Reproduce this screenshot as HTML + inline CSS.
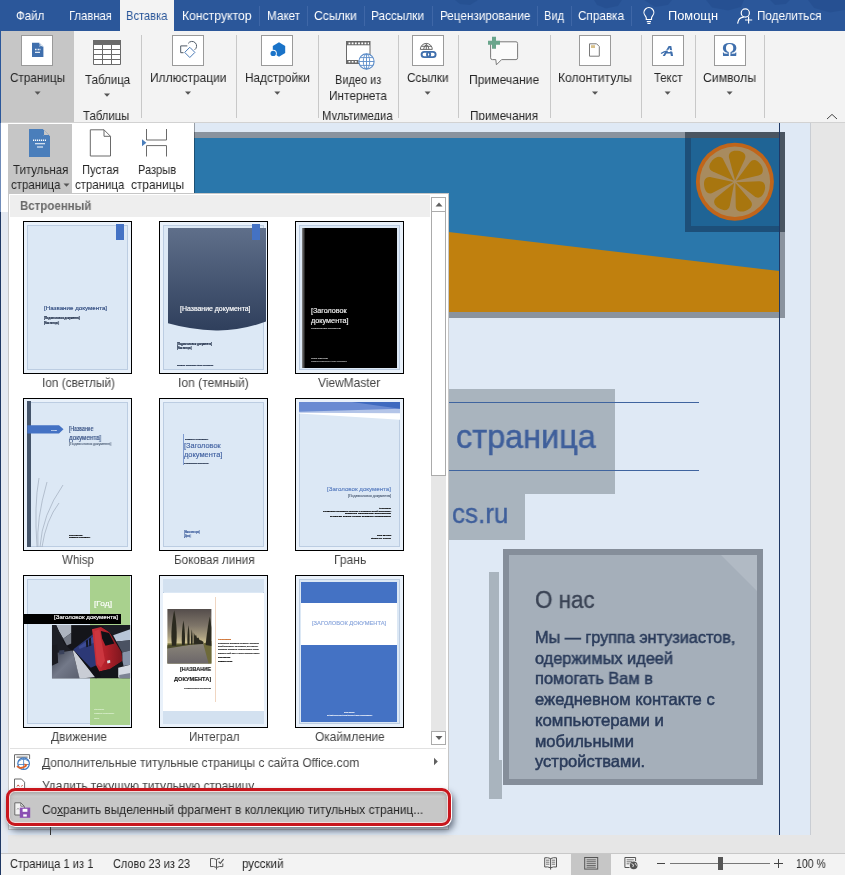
<!DOCTYPE html>
<html lang="ru"><head><meta charset="utf-8"><title>Word</title>
<style>

html,body{margin:0;padding:0;}
body{width:845px;height:875px;overflow:hidden;position:relative;background:#e6e6e6;font-family:"Liberation Sans",sans-serif;}
.a{position:absolute;}
.t{position:absolute;white-space:nowrap;line-height:1;transform-origin:0 0;display:block;will-change:transform;}
svg{position:absolute;overflow:visible;}
.th{width:109px;height:153px;box-sizing:border-box;border:1px solid #000;background:#dce8f5;overflow:hidden;}
.th .a{position:absolute;}
.fr1{left:0;top:0;right:0;bottom:0;border:3px solid #e9f1fa;}
.fr2{left:3px;top:3px;right:3px;bottom:3px;border:1px solid #bccde2;}
u{text-decoration:underline;text-decoration-skip-ink:none;}

</style></head>
<body>
<div class="a" style="left:0px;top:123px;width:810px;height:712px;background:#dfe9f5;"></div>
<div class="a" style="left:194px;top:132px;width:591px;height:6px;background:#8a939e;"></div>
<div class="a" style="left:194px;top:138px;width:585.5px;height:174px;background:#2a77ab;"></div>
<svg style="left:0;top:0" width="845" height="875"><polygon points="194,202 779.5,271 779.5,312 194,312" fill="#c0800e"/></svg>
<div class="a" style="left:194px;top:312px;width:591px;height:6px;background:#8a939e;"></div>
<div class="a" style="left:780px;top:138px;width:5px;height:180px;background:#8a939e;"></div>
<div class="a" style="left:685px;top:132px;width:100px;height:100px;background:#1d4f79;"></div>
<div class="a" style="left:685px;top:132px;width:100px;height:6px;background:#4a5561;"></div>
<div class="a" style="left:780px;top:132px;width:5px;height:100px;background:#4a5561;"></div>
<div class="a" style="left:691px;top:138px;width:89px;height:88px;background:#1f6495;"></div>
<svg style="left:0;top:0" width="845" height="875">
<circle cx="734.9" cy="181.7" r="39" fill="#c0651a"/>
<circle cx="734.9" cy="181.7" r="35.2" fill="#a88b5f"/>
<g fill="#a8760f" transform="translate(734.9,181.7)">
<path transform="rotate(5.0)" d="M0,-1.5 L-7.8,-23 C-9.6,-28 -6,-31 0,-31 C6,-31 9.6,-28 7.8,-23 Z"/><path transform="rotate(56.4)" d="M0,-1.5 L-7.8,-23 C-9.6,-28 -6,-31 0,-31 C6,-31 9.6,-28 7.8,-23 Z"/><path transform="rotate(107.9)" d="M0,-1.5 L-7.8,-23 C-9.6,-28 -6,-31 0,-31 C6,-31 9.6,-28 7.8,-23 Z"/><path transform="rotate(159.3)" d="M0,-1.5 L-7.8,-23 C-9.6,-28 -6,-31 0,-31 C6,-31 9.6,-28 7.8,-23 Z"/><path transform="rotate(210.7)" d="M0,-1.5 L-7.8,-23 C-9.6,-28 -6,-31 0,-31 C6,-31 9.6,-28 7.8,-23 Z"/><path transform="rotate(262.1)" d="M0,-1.5 L-7.8,-23 C-9.6,-28 -6,-31 0,-31 C6,-31 9.6,-28 7.8,-23 Z"/><path transform="rotate(313.6)" d="M0,-1.5 L-7.8,-23 C-9.6,-28 -6,-31 0,-31 C6,-31 9.6,-28 7.8,-23 Z"/>
</g></svg>
<div class="a" style="left:779px;top:123px;width:1px;height:712px;background:#1f3864;"></div>
<div class="a" style="left:449px;top:389px;width:166px;height:105px;background:#a9b4be;"></div>
<div class="a" style="left:449px;top:494px;width:76px;height:46px;background:#a9b4be;"></div>
<div class="a" style="left:449px;top:402px;width:250px;height:1.3px;background:#3f649f;"></div>
<div class="a" style="left:449px;top:470px;width:250px;height:1.3px;background:#3f649f;"></div>
<span class="t" style="left:455.60px;top:420.46px;font-size:33.60px;color:#3f5f9b;font-weight:normal;transform:scaleX(0.9666);-webkit-text-stroke:0.5px #3f5f9b;">страница</span>
<span class="t" style="left:451.80px;top:499.92px;font-size:27.50px;color:#3f5f9b;font-weight:normal;transform:scaleX(0.9464);-webkit-text-stroke:0.4px #3f5f9b;">cs.ru</span>
<div class="a" style="left:489px;top:572px;width:9.6px;height:227px;background:#a9b4be;"></div>
<div class="a" style="left:489px;top:760px;width:12.5px;height:39px;background:#a9b4be;"></div>
<div class="a" style="left:503px;top:549px;width:260px;height:235.6px;background:#858e9a;"></div>
<div class="a" style="left:509px;top:555px;width:248px;height:223.6px;background:#a5afba;"></div>
<svg style="left:0;top:0" width="845" height="875"><polygon points="721,555 757,555 757,591" fill="#b1bac4"/></svg>
<span class="t" style="left:534.50px;top:588.81px;font-size:23.50px;color:#3a4354;font-weight:normal;transform:scaleX(0.9535);-webkit-text-stroke:0.35px #3a4354;">О нас</span>
<span class="t" style="left:534.50px;top:628.93px;font-size:16.50px;color:#2a3b5a;font-weight:normal;transform:scaleX(0.9828);-webkit-text-stroke:0.5px #2a3b5a;">Мы — группа энтузиастов,</span>
<span class="t" style="left:534.50px;top:649.68px;font-size:16.50px;color:#2a3b5a;font-weight:normal;transform:scaleX(0.9891);-webkit-text-stroke:0.5px #2a3b5a;">одержимых идеей</span>
<span class="t" style="left:534.50px;top:670.43px;font-size:16.50px;color:#2a3b5a;font-weight:normal;transform:scaleX(0.9931);-webkit-text-stroke:0.5px #2a3b5a;">помогать Вам в</span>
<span class="t" style="left:534.50px;top:691.18px;font-size:16.50px;color:#2a3b5a;font-weight:normal;transform:scaleX(1.0051);-webkit-text-stroke:0.5px #2a3b5a;">ежедневном контакте с</span>
<span class="t" style="left:534.50px;top:711.93px;font-size:16.50px;color:#2a3b5a;font-weight:normal;transform:scaleX(1.0171);-webkit-text-stroke:0.5px #2a3b5a;">компьютерами и</span>
<span class="t" style="left:534.50px;top:732.68px;font-size:16.50px;color:#2a3b5a;font-weight:normal;transform:scaleX(0.9974);-webkit-text-stroke:0.5px #2a3b5a;">мобильными</span>
<span class="t" style="left:534.50px;top:753.43px;font-size:16.50px;color:#2a3b5a;font-weight:normal;transform:scaleX(1.0004);-webkit-text-stroke:0.5px #2a3b5a;">устройствами.</span>
<div class="a" style="left:810px;top:123px;width:1px;height:712px;background:#c9cdd3;"></div>
<div class="a" style="left:811px;top:123px;width:34px;height:730px;background:#e6e6e6;"></div>
<div class="a" style="left:0px;top:835px;width:845px;height:18px;background:#e6e6e6;"></div>
<div class="a" style="left:0px;top:0px;width:845px;height:30.7px;background:#2b579a;"></div>
<svg style="left:0;top:0" width="845" height="31"><g fill="#234c8c" opacity="0.55"><path d="M594,0 L622,0 L618,6 L606,8.5 L597,5 Z"/><path d="M644,0 L672,0 L668,5 L655,7 Z"/><path d="M706,0 L744,0 L741,7 L728,10.5 L712,7.5 Z"/><path d="M770,0 L790,0 L786,4 L775,5 Z"/><path d="M808,0 L845,0 L845,10 L830,12.5 L814,8 Z"/><path d="M455,0 L478,0 L470,5 L460,4 Z"/></g></svg>
<div class="a" style="left:120px;top:0px;width:54px;height:31px;background:#f3f3f3;"></div>
<span class="t" style="left:16.30px;top:9.93px;font-size:12.60px;color:#ffffff;font-weight:normal;transform:scaleX(0.9171);">Файл</span>
<span class="t" style="left:68.50px;top:9.93px;font-size:12.60px;color:#ffffff;font-weight:normal;transform:scaleX(0.8949);">Главная</span>
<span class="t" style="left:126.20px;top:9.93px;font-size:12.60px;color:#2b579a;font-weight:normal;transform:scaleX(0.8844);">Вставка</span>
<span class="t" style="left:182.40px;top:9.93px;font-size:12.60px;color:#ffffff;font-weight:normal;transform:scaleX(0.9692);">Конструктор</span>
<span class="t" style="left:266.50px;top:9.93px;font-size:12.60px;color:#ffffff;font-weight:normal;transform:scaleX(0.9283);">Макет</span>
<span class="t" style="left:314.00px;top:9.93px;font-size:12.60px;color:#ffffff;font-weight:normal;transform:scaleX(0.9652);">Ссылки</span>
<span class="t" style="left:371.30px;top:9.93px;font-size:12.60px;color:#ffffff;font-weight:normal;transform:scaleX(0.9375);">Рассылки</span>
<span class="t" style="left:439.60px;top:9.93px;font-size:12.60px;color:#ffffff;font-weight:normal;transform:scaleX(0.9296);">Рецензирование</span>
<span class="t" style="left:544.30px;top:9.93px;font-size:12.60px;color:#ffffff;font-weight:normal;transform:scaleX(0.8773);">Вид</span>
<span class="t" style="left:578.00px;top:9.93px;font-size:12.60px;color:#ffffff;font-weight:normal;transform:scaleX(0.9311);">Справка</span>
<span class="t" style="left:668.00px;top:9.93px;font-size:12.60px;color:#ffffff;font-weight:normal;transform:scaleX(1.0194);">Помощн</span>
<span class="t" style="left:757.00px;top:9.93px;font-size:12.60px;color:#ffffff;font-weight:normal;transform:scaleX(0.9274);">Поделиться</span>
<div class="a" style="left:259px;top:6px;width:1px;height:20px;background:#3f67a7;"></div>
<div class="a" style="left:306.6px;top:6px;width:1px;height:20px;background:#3f67a7;"></div>
<div class="a" style="left:363.6px;top:6px;width:1px;height:20px;background:#3f67a7;"></div>
<div class="a" style="left:431.9px;top:6px;width:1px;height:20px;background:#3f67a7;"></div>
<div class="a" style="left:536.7px;top:6px;width:1px;height:20px;background:#3f67a7;"></div>
<div class="a" style="left:570.6px;top:6px;width:1px;height:20px;background:#3f67a7;"></div>
<div class="a" style="left:630.5px;top:6px;width:1px;height:20px;background:#3f67a7;"></div>
<div class="a" style="left:0px;top:31px;width:845px;height:91px;background:#f3f3f3;"></div>
<div class="a" style="left:0px;top:122px;width:845px;height:1px;background:#d2d2d2;"></div>
<div class="a" style="left:1px;top:31px;width:73px;height:91px;background:#c6c6c6;"></div>
<div class="a" style="left:140.5px;top:35px;width:1px;height:83px;background:#c8c8c8;"></div>
<div class="a" style="left:235.6px;top:35px;width:1px;height:83px;background:#c8c8c8;"></div>
<div class="a" style="left:318.4px;top:35px;width:1px;height:83px;background:#c8c8c8;"></div>
<div class="a" style="left:398px;top:35px;width:1px;height:83px;background:#c8c8c8;"></div>
<div class="a" style="left:457.7px;top:35px;width:1px;height:83px;background:#c8c8c8;"></div>
<div class="a" style="left:549.8px;top:35px;width:1px;height:83px;background:#c8c8c8;"></div>
<div class="a" style="left:640.5px;top:35px;width:1px;height:83px;background:#c8c8c8;"></div>
<div class="a" style="left:694.5px;top:35px;width:1px;height:83px;background:#c8c8c8;"></div>
<div class="a" style="left:764px;top:35px;width:1px;height:83px;background:#c8c8c8;"></div>
<div class="a" style="left:21px;top:35px;width:32px;height:31px;background:#ffffff;border:1px solid #9a9a9a;box-sizing:border-box;"></div>
<div class="a" style="left:172px;top:35px;width:32px;height:31px;background:#ffffff;border:1px solid #9a9a9a;box-sizing:border-box;"></div>
<div class="a" style="left:261px;top:35px;width:32px;height:31px;background:#ffffff;border:1px solid #9a9a9a;box-sizing:border-box;"></div>
<div class="a" style="left:412px;top:35px;width:32px;height:31px;background:#ffffff;border:1px solid #9a9a9a;box-sizing:border-box;"></div>
<div class="a" style="left:579px;top:35px;width:32px;height:31px;background:#ffffff;border:1px solid #9a9a9a;box-sizing:border-box;"></div>
<div class="a" style="left:652px;top:35px;width:32px;height:31px;background:#ffffff;border:1px solid #9a9a9a;box-sizing:border-box;"></div>
<div class="a" style="left:714px;top:35px;width:32px;height:31px;background:#ffffff;border:1px solid #9a9a9a;box-sizing:border-box;"></div>
<span class="t" style="left:9.50px;top:72.23px;font-size:12.60px;color:#262626;font-weight:normal;transform:scaleX(0.9334);">Страницы</span>
<svg style="left:0;top:0" width="845" height="875"><polygon points="34.6,91.5 40.6,91.5 37.6,94.8" fill="#555"/></svg>
<span class="t" style="left:84.50px;top:74.43px;font-size:12.60px;color:#262626;font-weight:normal;transform:scaleX(0.9152);">Таблица</span>
<svg style="left:0;top:0" width="845" height="875"><polygon points="104,93.5 110,93.5 107,96.8" fill="#555"/></svg>
<span class="t" style="left:83.30px;top:110.43px;font-size:12.60px;color:#262626;font-weight:normal;transform:scaleX(0.9021);">Таблицы</span>
<span class="t" style="left:149.80px;top:72.23px;font-size:12.60px;color:#262626;font-weight:normal;transform:scaleX(0.9496);">Иллюстрации</span>
<svg style="left:0;top:0" width="845" height="875"><polygon points="185,91.5 191,91.5 188,94.8" fill="#555"/></svg>
<span class="t" style="left:244.70px;top:72.23px;font-size:12.60px;color:#262626;font-weight:normal;transform:scaleX(0.9391);">Надстройки</span>
<svg style="left:0;top:0" width="845" height="875"><polygon points="274.3,91.5 280.3,91.5 277.3,94.8" fill="#555"/></svg>
<span class="t" style="left:334.70px;top:74.43px;font-size:12.60px;color:#262626;font-weight:normal;transform:scaleX(0.8718);">Видео из</span>
<span class="t" style="left:329.00px;top:90.33px;font-size:12.60px;color:#262626;font-weight:normal;transform:scaleX(0.9383);">Интернета</span>
<span class="t" style="left:322.40px;top:110.43px;font-size:12.60px;color:#262626;font-weight:normal;transform:scaleX(0.8919);">Мультимедиа</span>
<span class="t" style="left:406.80px;top:72.23px;font-size:12.60px;color:#262626;font-weight:normal;transform:scaleX(0.9381);">Ссылки</span>
<svg style="left:0;top:0" width="845" height="875"><polygon points="424.6,91.5 430.6,91.5 427.6,94.8" fill="#555"/></svg>
<span class="t" style="left:468.50px;top:74.43px;font-size:12.60px;color:#262626;font-weight:normal;transform:scaleX(0.9629);">Примечание</span>
<span class="t" style="left:469.50px;top:110.43px;font-size:12.60px;color:#262626;font-weight:normal;transform:scaleX(0.9351);">Примечания</span>
<span class="t" style="left:558.00px;top:72.23px;font-size:12.60px;color:#262626;font-weight:normal;transform:scaleX(0.9653);">Колонтитулы</span>
<svg style="left:0;top:0" width="845" height="875"><polygon points="592,91.5 598,91.5 595,94.8" fill="#555"/></svg>
<span class="t" style="left:653.60px;top:72.23px;font-size:12.60px;color:#262626;font-weight:normal;transform:scaleX(0.8954);">Текст</span>
<svg style="left:0;top:0" width="845" height="875"><polygon points="664.6,91.5 670.6,91.5 667.6,94.8" fill="#555"/></svg>
<span class="t" style="left:703.00px;top:72.23px;font-size:12.60px;color:#262626;font-weight:normal;transform:scaleX(0.9730);">Символы</span>
<svg style="left:0;top:0" width="845" height="875"><polygon points="726.6,91.5 732.6,91.5 729.6,94.8" fill="#555"/></svg>
<div class="a" style="left:0px;top:853px;width:845px;height:22px;background:#f3f3f3;"></div>
<div class="a" style="left:0px;top:853px;width:845px;height:1px;background:#c8c8c8;"></div>
<div class="a" style="left:571px;top:854px;width:40px;height:21px;background:#c6c6c6;"></div>
<div class="a" style="left:75px;top:119.5px;width:770px;height:2.5px;background:#f3f3f3;"></div>
<div class="a" style="left:75px;top:122px;width:770px;height:1px;background:#d2d2d2;"></div>
<svg style="left:0;top:0" width="845" height="875"><path d="M32,42.8 H39.4 L43.4,46.8 V57 H32 Z" fill="#3f6fad"/><path d="M39.4,42.8 V46.8 H43.4 Z" fill="#fff"/><path d="M39.9,44 V46.4 H42.4" fill="none" stroke="#3f6fad" stroke-width="0.9"/><path d="M35,49.5 H40.5" stroke="#fff" stroke-width="1.4" stroke-dasharray="0.9,0.6"/><path d="M35,52.3 H40" stroke="#fff" stroke-width="1.1"/></svg>
<svg style="left:0;top:0" width="845" height="875"><rect x="93" y="40" width="28" height="25" fill="#fff" stroke="none"/><rect x="93" y="40" width="28" height="5" fill="#6a6a6a"/><path d="M93.5,40 V64.5 H120.5 V40 M93.5,49.5 H120.5 M93.5,54.5 H120.5 M93.5,59.5 H120.5 M102.5,45 V64.5 M111.5,45 V64.5" fill="none" stroke="#6a6a6a" stroke-width="1"/></svg>
<svg style="left:0;top:0" width="845" height="875"><g fill="none" stroke-width="1"><path d="M187.3,45.9 H180.7 V52.7 H183.5" stroke="#4f5a66"/><path d="M188.2,43.4 A4.6,4.6 0 1 1 194.6,49.8" stroke="#4f5a66"/><path d="M189.8,47.3 L194.9,52.4 L189.8,57.5 L184.7,52.4 Z" stroke="#4a7ab5" fill="#fff"/></g></svg>
<svg style="left:0;top:0" width="845" height="875"><path d="M279,42.3 L285.2,45.9 V53.1 L279,56.7 L272.8,53.1 V45.9 Z" fill="#1a73c8"/><circle cx="273.2" cy="53.4" r="3.6" fill="#fff"/><circle cx="273.2" cy="53.4" r="2.7" fill="#1a73c8"/></svg>
<svg style="left:0;top:0" width="845" height="875"><rect x="346.5" y="41.5" width="23.5" height="22" fill="#fff" stroke="#6a6a6a" stroke-width="1"/><rect x="346.5" y="41.5" width="23.5" height="3.8" fill="#6a6a6a"/><rect x="346.5" y="60" width="12" height="3.5" fill="#6a6a6a"/><path d="M348.5,43.4 H369" stroke="#fff" stroke-width="1.6" stroke-dasharray="1.8,1.4"/><path d="M348.5,61.8 H357.5" stroke="#fff" stroke-width="1.5" stroke-dasharray="1.8,1.4"/><circle cx="366.5" cy="61.5" r="7.6" fill="#fff" stroke="#5b8cc8" stroke-width="1.1"/><g fill="none" stroke="#5b8cc8" stroke-width="0.9"><ellipse cx="366.5" cy="61.5" rx="3.2" ry="7.4"/><path d="M359,61.5 H374 M360.2,57.6 H372.8 M360.2,65.4 H372.8 M366.5,54 V69"/></g></svg>
<svg style="left:0;top:0" width="845" height="875"><g fill="none" stroke="#6a6a6a" stroke-width="1"><path d="M420.3,49.4 A6,6 0 0 1 432.3,49.4 Z" fill="#fff"/><path d="M423.6,49.4 A2.8,6 0 0 1 429,49.4 M426.3,43.4 V49.4 M421.3,46.3 H431.3"/></g><g fill="none" stroke="#3f6fad" stroke-width="1.9"><rect x="421.6" y="51.9" width="8.6" height="5.2" rx="2.6"/><rect x="427" y="51.9" width="8.6" height="5.2" rx="2.6"/></g></svg>
<svg style="left:0;top:0" width="845" height="875"><path d="M492,41.8 H516 Q517.6,41.8 517.6,43.4 V57.8 Q517.6,59.6 516,59.6 H501.6 L496.4,64.8 L495.8,59.6 H492.3 Q490.6,59.6 490.6,57.8 V43.4 Q490.6,41.8 492,41.8 Z" fill="#fbfbfb" stroke="#7a7a7a" stroke-width="1"/><path d="M492,36.8 H496 V40.8 H500 V44.8 H496 V48.8 H492 V44.8 H488 V40.8 H492 Z" fill="#6aa58c"/></svg>
<svg style="left:0;top:0" width="845" height="875"><path d="M589.5,43.8 H596.6 L599.3,46.5 V56.2 H589.5 Z" fill="#fff" stroke="#7a7a7a" stroke-width="1"/><rect x="591" y="45.2" width="4" height="2.8" fill="#d8c08a"/></svg>
<span class="t" style="left:662.6px;top:42.6px;font-size:15.5px;font-weight:bold;font-style:italic;color:#3f6fad;">A</span>
<svg style="left:0;top:0" width="845" height="875"><path d="M661.5,52.3 Q667.5,48.6 675.5,52" fill="none" stroke="#fff" stroke-width="1.4"/><path d="M661,53.6 Q664,51.4 667.6,51" fill="none" stroke="#3f6fad" stroke-width="1.3"/></svg>
<span class="t" style="left:722.4px;top:40.4px;font-size:19px;font-weight:bold;font-family:'Liberation Serif',serif;color:#3f6fad;">Ω</span>
<svg style="left:0;top:0" width="845" height="875"><path d="M827,119 L832,114.4 L837,119" fill="none" stroke="#444" stroke-width="1"/></svg>
<svg style="left:0;top:0" width="845" height="875"><g transform="translate(1,0)" fill="none" stroke="#fff" stroke-width="1.2"><path d="M645.3,19.5 V18.2 Q645.3,17 644.3,15.8 A4.9,4.9 0 1 1 651.5,15.8 Q650.5,17 650.5,18.2 V19.5 Z"/><path d="M645.8,21.6 H650 M646.4,23.5 H649.4"/></g></svg>
<svg style="left:0;top:0" width="845" height="875"><g fill="none" stroke="#fff" stroke-width="1.2"><circle cx="745.3" cy="13" r="4.1"/><path d="M737.6,23.6 Q738.4,17.4 743.8,17.2"/><path d="M748.6,16.4 V23.6 M745,20 H752.2"/></g></svg>
<svg style="left:0;top:0" width="845" height="875"><g fill="none" stroke="#555" stroke-width="1"><path d="M216.5,859.5 Q213.5,858 210.5,858.6 V866.6 Q213.5,866 216.5,867.5 Z"/><path d="M216.5,859.5 Q218,858.3 220,858.4 M216.5,867.5 Q219.5,866 222.8,866.6 V863.5"/><path d="M216.5,867.5 V869.5"/><path d="M218.6,861.6 L220.3,863.3 L223.6,859.2" stroke-width="1.2"/></g></svg>
<svg style="left:0;top:0" width="845" height="875"><g fill="none" stroke="#555" stroke-width="1"><path d="M550.6,858.6 Q547.6,857.2 544.7,857.8 V867 Q547.6,866.4 550.6,867.8 Q553.6,866.4 556.5,867 V857.8 Q553.6,857.2 550.6,858.6 Z M550.6,858.6 V869.6"/><path d="M546,860.2 H549.4 M546,862.2 H549.4 M546,864.2 H549.4 M551.8,860.2 H555.2 M551.8,862.2 H555.2 M551.8,864.2 H555.2" stroke-width="0.8"/></g></svg>
<svg style="left:0;top:0" width="845" height="875"><g fill="none" stroke="#555" stroke-width="1"><rect x="584.7" y="857.5" width="13" height="11.6"/><path d="M586.6,859.8 H595.8 M586.6,861.7 H595.8 M586.6,863.6 H595.8 M586.6,865.5 H595.8 M586.6,867.2 H595.8" stroke-width="0.8"/></g></svg>
<svg style="left:0;top:0" width="845" height="875"><g fill="none" stroke="#555" stroke-width="1"><path d="M629.5,867.5 H624.9 V857.5 H635.6 V861"/><path d="M626.6,859.8 H633.8 M626.6,861.8 H632 M626.6,863.8 H629.5" stroke-width="0.8"/></g><circle cx="633.7" cy="865.4" r="3.8" fill="#555"/><path d="M631.5,863.6 L633.6,864.8 L632.8,867 M635,863 L636.6,865.6" stroke="#f3f3f3" stroke-width="0.9" fill="none"/></svg>
<span class="t" style="left:10.00px;top:857.83px;font-size:12.60px;color:#262626;font-weight:normal;transform:scaleX(0.8834);">Страница 1 из 1</span>
<span class="t" style="left:113.00px;top:857.83px;font-size:12.60px;color:#262626;font-weight:normal;transform:scaleX(0.8704);">Слово 23 из 23</span>
<span class="t" style="left:242.30px;top:857.83px;font-size:12.60px;color:#262626;font-weight:normal;transform:scaleX(0.9181);">русский</span>
<span class="t" style="left:796.20px;top:857.83px;font-size:12.60px;color:#262626;font-weight:normal;transform:scaleX(0.8343);">100 %</span>
<div class="a" style="left:670px;top:863px;width:100px;height:1px;background:#777;"></div>
<div class="a" style="left:718px;top:857px;width:5px;height:13px;background:#555;"></div>
<div class="a" style="left:657px;top:863px;width:8px;height:1.3px;background:#444;"></div>
<div class="a" style="left:774px;top:863px;width:9px;height:1.3px;background:#444;"></div>
<div class="a" style="left:778px;top:859px;width:1.3px;height:9px;background:#444;"></div>
<div class="a" style="left:0px;top:123px;width:194px;height:89px;background:#ffffff;"></div>
<div class="a" style="left:8px;top:124px;width:64px;height:69px;background:#c6c6c6;"></div>
<div class="a" style="left:194px;top:123px;width:1px;height:70px;background:rgba(0,0,0,0.32);"></div>
<span class="t" style="left:12.50px;top:163.63px;font-size:12.60px;color:#262626;font-weight:normal;transform:scaleX(0.9096);">Титульная</span>
<span class="t" style="left:10.70px;top:179.33px;font-size:12.60px;color:#262626;font-weight:normal;transform:scaleX(0.9119);">страница</span>
<svg style="left:0;top:0" width="845" height="875"><polygon points="63.5,183.5 69.5,183.5 66.5,186.8" fill="#555"/></svg>
<span class="t" style="left:81.50px;top:163.63px;font-size:12.60px;color:#262626;font-weight:normal;transform:scaleX(0.8909);">Пустая</span>
<span class="t" style="left:74.80px;top:179.33px;font-size:12.60px;color:#262626;font-weight:normal;transform:scaleX(0.9101);">страница</span>
<span class="t" style="left:137.50px;top:163.63px;font-size:12.60px;color:#262626;font-weight:normal;transform:scaleX(0.8784);">Разрыв</span>
<span class="t" style="left:130.50px;top:179.33px;font-size:12.60px;color:#262626;font-weight:normal;transform:scaleX(0.9427);">страницы</span>
<svg style="left:0;top:0" width="845" height="875">
<path d="M29,129 H43 L50,136 V157 H29 Z" fill="#4a7ebb"/>
<path d="M43,129 V136 H50 Z" fill="#c6c6c6"/><path d="M43.5,130 V135.5 H49" fill="none" stroke="#4a7ebb" stroke-width="1"/>
<path d="M33,140.3 H46" stroke="#fff" stroke-width="1.6" stroke-dasharray="1.2,0.8"/>
<path d="M35,143.8 H45 M37,147 H43" stroke="#fff" stroke-width="1.1"/>
<path d="M90.3,129.8 H104 L110.5,136.3 V156 H90.3 Z M104,129.8 V136.3 H110.5" fill="#fff" stroke="#6a6a6a" stroke-width="1"/>
<path d="M146.5,129 V140 H166.5 V129 M146.5,156.5 V145.6 H166.5 V156.5" fill="none" stroke="#6a6a6a" stroke-width="1"/>
<path d="M142,139.2 L146.4,142.7 L142,146.2 Z" fill="#4a7ebb"/>
</svg>
<div class="a" style="left:0px;top:212px;width:1.3px;height:663px;background:#1f3864;"></div>
<div class="a" style="left:0px;top:123px;width:1px;height:89px;background:#6f8bb8;"></div>
<div class="a" style="left:0px;top:31px;width:1px;height:92px;background:#2b579a;"></div>
<div class="a" style="left:1.3px;top:212px;width:6.7px;height:641px;background:#e4e9f1;"></div>
<div class="a" style="left:8px;top:193px;width:441px;height:637px;background:#ffffff;border:1px solid #c6c6c6;box-sizing:border-box;"></div>
<div class="a" style="left:10px;top:195px;width:420px;height:21.5px;background:#eeeeee;"></div>
<span class="t" style="left:19.50px;top:200.43px;font-size:12.60px;color:#6a6a6a;font-weight:bold;transform:scaleX(0.9123);">Встроенный</span>
<div class="a" style="left:431px;top:197px;width:15px;height:548px;background:#e6e6e6;"></div>
<div class="a" style="left:431px;top:197px;width:15px;height:15px;background:#ffffff;border:1px solid #ababab;box-sizing:border-box;"></div>
<div class="a" style="left:431px;top:211px;width:15px;height:265px;background:#ffffff;border:1px solid #ababab;box-sizing:border-box;"></div>
<div class="a" style="left:431px;top:731px;width:15px;height:14px;background:#ffffff;border:1px solid #ababab;box-sizing:border-box;"></div>
<svg style="left:0;top:0" width="845" height="875"><polygon points="435.5,206.5 442.5,206.5 439,202.5" fill="#606060"/><polygon points="435.5,736 442.5,736 439,740" fill="#606060"/><polygon points="434,757.7 434,765.3 437.8,761.5" fill="#606060"/></svg>
<div class="a th" style="left:23px;top:221px;"><div class="a fr1"></div><div class="a fr2"></div><div class="a" style="left:91.7px;top:2.4px;width:8.6px;height:15.2px;background:#4472c4;"></div><span class="t" style="left:20.30px;top:82.61px;font-size:6.20px;color:#2f4a7f;font-weight:normal;transform:scaleX(1.0018);-webkit-text-stroke:0.15px #2f4a7f;">[Название документа]</span><span class="t" style="left:20.30px;top:96.38px;font-size:2.60px;color:#1c2a44;font-weight:bold;transform:scaleX(1.0490);-webkit-text-stroke:0.18px #1c2a44;">[Подзаголовок документа]</span><span class="t" style="left:20.30px;top:100.68px;font-size:2.60px;color:#1c2a44;font-weight:bold;transform:scaleX(0.8850);-webkit-text-stroke:0.18px #1c2a44;">[Имя автора]</span></div>
<div class="a th" style="left:159px;top:221px;"><div class="a fr1"></div><div class="a fr2"></div><svg style="left:0px;top:0px" width="107" height="151" viewBox="160 222 107 151"><defs><linearGradient id="gd" x1="0" y1="0" x2="0" y2="1"><stop offset="0" stop-color="#5f6f8a"/><stop offset="1" stop-color="#2f3f5c"/></linearGradient></defs><path d="M168,228 H266 V321.5 Q240,331 216,330.5 Q190,329.5 168,323.2 Z" fill="url(#gd)"/></svg><div class="a" style="left:91.7px;top:2.4px;width:8.6px;height:15.2px;background:#4472c4;"></div><span class="t" style="left:20.30px;top:83.50px;font-size:6.40px;color:#ffffff;font-weight:normal;transform:scaleX(1.0838);-webkit-text-stroke:0.15px #ffffff;">[Название документа]</span><span class="t" style="left:17.00px;top:122.28px;font-size:2.60px;color:#1c2a44;font-weight:bold;transform:scaleX(1.0226);-webkit-text-stroke:0.18px #1c2a44;">[Подзаголовок документа]</span><span class="t" style="left:17.00px;top:125.58px;font-size:2.60px;color:#1c2a44;font-weight:bold;transform:scaleX(0.8730);-webkit-text-stroke:0.18px #1c2a44;">[Имя автора]</span><span class="t" style="left:17.00px;top:141.70px;font-size:2.20px;color:#1c2a44;font-weight:bold;transform:scaleX(0.7359);-webkit-text-stroke:0.18px #1c2a44;">[Название организации] [Адрес организации]</span></div>
<div class="a th" style="left:295px;top:221px;"><div class="a fr1"></div><div class="a fr2"></div><div class="a" style="left:6px;top:6px;width:95.2px;height:140px;background:#000;background:linear-gradient(90deg,#8a8a8a 0,#000 3.5px,#000 100%);"></div><span class="t" style="left:14.80px;top:86.29px;font-size:6.60px;color:#f0f0f0;font-weight:normal;transform:scaleX(1.0870);-webkit-text-stroke:0.15px #f0f0f0;">[Заголовок</span><span class="t" style="left:14.80px;top:95.79px;font-size:6.60px;color:#f0f0f0;font-weight:normal;transform:scaleX(1.1034);-webkit-text-stroke:0.15px #f0f0f0;">документа]</span><span class="t" style="left:14.80px;top:106.19px;font-size:2.40px;color:#a8a8a8;font-weight:normal;transform:scaleX(1.0263);-webkit-text-stroke:0.18px #a8a8a8;">[Подзаголовок документа]</span><span class="t" style="left:14.80px;top:135.59px;font-size:2.40px;color:#a0a0a0;font-weight:normal;transform:scaleX(1.1847);-webkit-text-stroke:0.18px #a0a0a0;">[Имя автора]</span><span class="t" style="left:14.80px;top:138.21px;font-size:2.00px;color:#8a8a8a;font-weight:normal;transform:scaleX(0.8529);-webkit-text-stroke:0.18px #8a8a8a;">[Название организации] [Адрес организации]</span></div>
<div class="a th" style="left:23px;top:398px;"><div class="a fr1"></div><div class="a fr2"></div><svg style="left:0px;top:0px" width="107" height="151" viewBox="24 399 107 151"><g fill="none" stroke="#8894a6" stroke-width="0.5"><path d="M37,547 Q34,505 39,478"/><path d="M38,547 Q36,520 47,482"/><path d="M40,547 Q42,515 63,485"/><path d="M42,547 Q46,520 59,503"/></g></svg><div class="a" style="left:3.3px;top:2.4px;width:3.3px;height:145.8px;background:#44546a;"></div><svg style="left:0px;top:0px" width="107" height="151" viewBox="24 399 107 151"><path d="M27.3,425.2 H59 L63.5,429.3 L59,433.4 H27.3 Z" fill="#4472c4"/></svg><span class="t" style="left:27.00px;top:30.59px;font-size:2.40px;color:#cfdcf3;font-weight:normal;transform:scaleX(1.1672);-webkit-text-stroke:0.18px #cfdcf3;">[Год]</span><span class="t" style="left:44.50px;top:27.36px;font-size:6.30px;color:#2f4a7f;font-weight:normal;transform:scaleX(0.8130);-webkit-text-stroke:0.15px #2f4a7f;">[Название</span><span class="t" style="left:44.50px;top:35.56px;font-size:6.30px;color:#2f4a7f;font-weight:normal;transform:scaleX(0.9860);-webkit-text-stroke:0.15px #2f4a7f;">документа]</span><span class="t" style="left:44.50px;top:43.83px;font-size:3.60px;color:#5a6a80;font-weight:normal;transform:scaleX(0.9655);-webkit-text-stroke:0.15px #5a6a80;">[Подзаголовок документа]</span><span class="t" style="left:44.50px;top:135.79px;font-size:2.40px;color:#000;font-weight:bold;transform:scaleX(0.8825);-webkit-text-stroke:0.18px #000;">[Имя автора]</span><span class="t" style="left:44.50px;top:138.19px;font-size:2.40px;color:#000;font-weight:bold;transform:scaleX(0.7340);-webkit-text-stroke:0.18px #000;">[Название организации]</span></div>
<div class="a th" style="left:159px;top:398px;"><div class="a fr1"></div><div class="a fr2"></div><div class="a" style="left:23.2px;top:35.3px;width:0.7px;height:31.1px;background:#7f9bd0;"></div><span class="t" style="left:24.60px;top:39.59px;font-size:2.40px;color:#1c2a44;font-weight:bold;transform:scaleX(0.8039);-webkit-text-stroke:0.18px #1c2a44;">[Название организации]</span><span class="t" style="left:24.40px;top:43.16px;font-size:7.40px;color:#4060a0;font-weight:normal;transform:scaleX(0.9942);-webkit-text-stroke:0.15px #4060a0;">[Заголовок</span><span class="t" style="left:24.40px;top:51.96px;font-size:7.40px;color:#4060a0;font-weight:normal;transform:scaleX(1.0080);-webkit-text-stroke:0.15px #4060a0;">документа]</span><span class="t" style="left:24.40px;top:63.89px;font-size:2.40px;color:#1c2a44;font-weight:bold;transform:scaleX(0.7845);-webkit-text-stroke:0.18px #1c2a44;">[Подзаголовок документа]</span><span class="t" style="left:24.40px;top:132.88px;font-size:2.60px;color:#3a5a9a;font-weight:normal;transform:scaleX(1.0085);-webkit-text-stroke:0.18px #3a5a9a;">[Имя автора]</span><span class="t" style="left:24.40px;top:136.98px;font-size:2.60px;color:#3a5a9a;font-weight:normal;transform:scaleX(0.9183);-webkit-text-stroke:0.18px #3a5a9a;">[Дата]</span></div>
<div class="a th" style="left:295px;top:398px;"><div class="a fr1"></div><div class="a fr2"></div><svg style="left:0px;top:0px" width="107" height="151" viewBox="296 399 107 151"><polygon points="299,402 400,402 400,419.7 299,413.4" fill="#ffffff"/><polygon points="299,402 400,402 400,413.3 299,412.8" fill="#b4c5e8"/><polygon points="299,402 400,402 400,408.7 299,411.8" fill="#6a8bd2"/><polygon points="352,402 400,402 400,408.7" fill="#3f6abf"/></svg><span class="t" style="left:30.80px;top:86.92px;font-size:6.00px;color:#5b7fc0;font-weight:normal;transform:scaleX(1.0245);-webkit-text-stroke:0.15px #5b7fc0;">[Заголовок документа]</span><span class="t" style="left:51.80px;top:95.54px;font-size:3.40px;color:#5a6a80;font-weight:normal;transform:scaleX(1.0476);-webkit-text-stroke:0.15px #5a6a80;">[Подзаголовок документа]</span><span class="t" style="left:83.00px;top:107.50px;font-size:2.20px;color:#000;font-weight:bold;transform:scaleX(1.0029);-webkit-text-stroke:0.18px #000;">Аннотация</span><span class="t" style="left:27.00px;top:111.20px;font-size:2.20px;color:#000;font-weight:bold;transform:scaleX(0.9943);-webkit-text-stroke:0.18px #000;">[Привлеките внимание читателя с помощью яркой аннотации]</span><span class="t" style="left:49.00px;top:113.40px;font-size:2.20px;color:#000;font-weight:bold;transform:scaleX(1.3409);-webkit-text-stroke:0.18px #000;">[краткое изложение документа]</span><span class="t" style="left:34.00px;top:115.60px;font-size:2.20px;color:#000;font-weight:bold;transform:scaleX(1.1516);-webkit-text-stroke:0.18px #000;">[Когда вы будете готовы добавить содержимое]</span><span class="t" style="left:80.60px;top:135.30px;font-size:2.20px;color:#000;font-weight:bold;transform:scaleX(1.0143);-webkit-text-stroke:0.18px #000;">[Имя автора]</span><span class="t" style="left:75.00px;top:137.50px;font-size:2.20px;color:#000;font-weight:bold;transform:scaleX(1.0228);-webkit-text-stroke:0.18px #000;">[Адрес эл. почты]</span></div>
<div class="a th" style="left:23px;top:575px;"><div class="a fr1"></div><div class="a fr2"></div><div class="a" style="left:65.5px;top:0px;width:40.3px;height:149.3px;background:#a9d18e;"></div><div class="a" style="left:0px;top:37.7px;width:97px;height:9.9px;background:#000;"></div><span class="t" style="left:70.00px;top:23.63px;font-size:8.00px;color:#ffffff;font-weight:normal;transform:scaleX(1.0473);-webkit-text-stroke:0.15px #ffffff;">[Год]</span><span class="t" style="left:29.50px;top:39.48px;font-size:5.90px;color:#ffffff;font-weight:normal;transform:scaleX(1.0436);-webkit-text-stroke:0.15px #ffffff;">[Заголовок документа]</span><svg style="left:0px;top:0px" width="107" height="151" viewBox="24 576 107 151"><defs><clipPath id="cp"><rect x="38" y="50" width="770" height="525"/></clipPath>
<linearGradient id="pf" x1="0" y1="0" x2="1" y2="1"><stop offset="0" stop-color="#3a3f4c"/><stop offset="0.5" stop-color="#737989"/><stop offset="1" stop-color="#5a5f6e"/></linearGradient>
<linearGradient id="rdf" x1="0" y1="0" x2="1" y2="0"><stop offset="0" stop-color="#c9303a"/><stop offset="0.45" stop-color="#b3212b"/><stop offset="1" stop-color="#7c161e"/></linearGradient></defs>
<g transform="translate(48,620) scale(0.10177)" clip-path="url(#cp)">
<rect x="38" y="50" width="770" height="525" fill="#14151a"/>
<polygon points="80,50 228,50 228,128 150,185 112,118" fill="#aeb5c0"/>
<polygon points="150,185 228,128 228,230 185,250" fill="#767c88"/>
<polygon points="38,50 80,50 160,230 230,300 38,330" fill="#1d1f26"/>
<polygon points="112,118 150,185 140,195 100,130" fill="#22242b"/>
<polygon points="38,330 240,300 312,575 38,575" fill="url(#pf)"/>
<polygon points="38,250 90,240 100,420 38,450" fill="#1a1b21"/>
<polygon points="110,300 160,295 160,335 110,340" fill="#39415a"/>
<polygon points="243,303 256,300 470,560 325,575 310,575" fill="#c9cdd5"/>
<polygon points="256,300 480,420 560,540 470,575 460,560" fill="#101116"/>
<polygon points="250,288 470,118 488,440 420,468 256,300" fill="#2c3876"/>
<polygon points="300,262 465,150 468,215 310,285" fill="#3d4c96"/>
<polygon points="372,205 392,192 395,262 376,268" fill="#141722"/><polygon points="402,184 422,172 426,250 405,258" fill="#141722"/>
<polygon points="432,92 520,68 602,118 722,318 732,402 610,482 505,505 470,440 442,160" fill="url(#rdf)"/>
<polygon points="455,110 505,92 560,400 520,470 480,430" fill="#cc363f"/>
<polygon points="520,108 600,128 652,232 565,252 532,182" fill="#0f1116"/>
<polygon points="505,505 610,482 732,402 742,470 690,560 520,570" fill="#15161b"/>
<polygon points="580,400 610,392 612,420 584,428" fill="#d9dde2"/>
<polygon points="560,50 808,50 808,110 640,150 600,118 540,72" fill="#1b1d24"/>
<polygon points="640,150 808,92 808,200 672,212" fill="#b9c6d8"/>
<polygon points="672,212 808,200 808,300 730,320 700,262" fill="#4a5262"/>
<polygon points="730,320 808,300 808,440 742,452 732,402" fill="#8793a8"/>
<polygon points="690,470 808,440 808,560 700,575 690,560" fill="#d5dae3"/>
<polygon points="700,540 808,520 808,575 700,575" fill="#7d8494"/>
</g></svg><span class="t" style="left:70.00px;top:133.39px;font-size:2.40px;color:#d5ebc7;font-weight:normal;transform:scaleX(0.7547);-webkit-text-stroke:0.18px #d5ebc7;">[Аннотация]</span><span class="t" style="left:70.00px;top:137.39px;font-size:2.40px;color:#d5ebc7;font-weight:normal;transform:scaleX(0.7516);-webkit-text-stroke:0.18px #d5ebc7;">[Название организации]</span><span class="t" style="left:70.00px;top:141.59px;font-size:2.40px;color:#d5ebc7;font-weight:normal;transform:scaleX(0.7547);-webkit-text-stroke:0.18px #d5ebc7;">[Дата]</span></div>
<div class="a th" style="left:159px;top:575px;"><div class="a fr1"></div><div class="a fr2"></div><div class="a" style="left:3.4px;top:3.2px;width:100.8px;height:13.3px;background:#d3e1f0;"></div><div class="a" style="left:3.4px;top:16.5px;width:100.8px;height:118.5px;background:#ffffff;"></div><div class="a" style="left:3.4px;top:135px;width:100.8px;height:13.2px;background:#d3e1f0;"></div><div class="a" style="left:54.8px;top:20.7px;width:0.6px;height:105.3px;background:#f0d6c2;"></div><svg style="left:0px;top:0px" width="107" height="151" viewBox="160 576 107 151"><defs><linearGradient id="sk" x1="0" y1="0" x2="0" y2="1"><stop offset="0" stop-color="#544d4b"/><stop offset="0.3" stop-color="#7d7468"/><stop offset="0.5" stop-color="#a99e80"/><stop offset="0.62" stop-color="#cfc394"/><stop offset="0.64" stop-color="#77733f"/><stop offset="1" stop-color="#77733f"/></linearGradient>
<linearGradient id="rd" x1="0" y1="0" x2="0" y2="1"><stop offset="0" stop-color="#8a8478"/><stop offset="1" stop-color="#6b6669"/></linearGradient></defs>
<rect x="167.4" y="609" width="44" height="54.6" fill="url(#sk)"/>
<polygon points="167.4,647.5 202.9,643.6 205.5,644 209,663.6 167.4,663.6" fill="url(#rd)"/>
<polygon points="167.4,645.2 198,643.4 167.4,648.6" fill="#4a4a2a"/>
<polygon points="203.2,643.6 211.4,641 211.4,663.6 208.6,663.6" fill="#6e6a3a"/>
<g fill="#2b2a1f"><path d="M174.2,610.2 C176.4,620 177.4,634 176.2,645.8 L172,645.8 C170.4,634 172.2,620 174.2,610.2 Z"/>
<path d="M183.4,620.5 C184.9,628 185.3,638 184.8,645 L182,645 C181.4,638 182,628 183.4,620.5 Z"/>
<path d="M188.5,625.2 C189.6,631 189.8,639 189.5,644.8 L187.5,644.8 C187.1,639 187.5,631 188.5,625.2 Z"/>
<path d="M191.8,629.2 C192.6,634 192.8,640 192.6,644.6 L191,644.6 C190.8,640 191,634 191.8,629.2 Z"/>
<path d="M193.5,644.4 L193.8,632.6 L195,636 L196,634.8 L197,638 L198.4,637.4 L199.6,640 L201.4,640.4 L203.6,642 L203,644 Z"/>
<path d="M209.8,616.8 C210.6,620 211,624 211.4,628 L211.4,646 L205.6,645 C206.6,636 208,624 209.8,616.8 Z"/></g></svg><span class="t" style="left:19.80px;top:91.34px;font-size:5.60px;color:#222;font-weight:bold;transform:scaleX(0.9411);-webkit-text-stroke:0.15px #222;">[НАЗВАНИЕ</span><span class="t" style="left:13.70px;top:101.24px;font-size:5.60px;color:#222;font-weight:bold;transform:scaleX(1.0114);-webkit-text-stroke:0.15px #222;">ДОКУМЕНТА]</span><span class="t" style="left:24.00px;top:111.79px;font-size:2.40px;color:#444;font-weight:normal;transform:scaleX(0.9296);-webkit-text-stroke:0.18px #444;">[Подзаголовок документа]</span><span class="t" style="left:58.20px;top:62.99px;font-size:2.40px;color:#c55a11;font-weight:bold;transform:scaleX(0.9954);-webkit-text-stroke:0.18px #c55a11;">Аннотация</span><span class="t" style="left:58.20px;top:66.04px;font-size:2.30px;color:#333;font-weight:bold;transform:scaleX(0.8025);-webkit-text-stroke:0.18px #333;">[Привлеките внимание читателя с помощью</span><span class="t" style="left:58.20px;top:69.24px;font-size:2.30px;color:#333;font-weight:bold;transform:scaleX(0.8079);-webkit-text-stroke:0.18px #333;">яркой аннотации. Как правило, это краткое</span><span class="t" style="left:58.20px;top:72.44px;font-size:2.30px;color:#333;font-weight:bold;transform:scaleX(0.7586);-webkit-text-stroke:0.18px #333;">изложение документа. Когда вы будете готовы</span><span class="t" style="left:58.20px;top:75.64px;font-size:2.30px;color:#333;font-weight:bold;transform:scaleX(0.7548);-webkit-text-stroke:0.18px #333;">добавить свой текст — просто щелкните здесь]</span><span class="t" style="left:58.20px;top:81.19px;font-size:2.40px;color:#000;font-weight:bold;transform:scaleX(0.8041);-webkit-text-stroke:0.18px #000;">[Имя автора]</span><span class="t" style="left:58.20px;top:84.59px;font-size:2.40px;color:#000;font-weight:bold;transform:scaleX(0.7084);-webkit-text-stroke:0.18px #000;">[Название курса]</span></div>
<div class="a th" style="left:295px;top:575px;"><div class="a fr1"></div><div class="a fr2"></div><div class="a" style="left:5px;top:6px;width:95.6px;height:139.6px;background:#4472c4;"></div><div class="a" style="left:5px;top:26.5px;width:95.6px;height:42.1px;background:#ffffff;"></div><span class="t" style="left:16.00px;top:45.16px;font-size:5.20px;color:#8ea9dd;font-weight:normal;transform:scaleX(1.1057);-webkit-text-stroke:0.15px #8ea9dd;">[ЗАГОЛОВОК ДОКУМЕНТА]</span><span class="t" style="left:47.50px;top:135.00px;font-size:2.20px;color:#e6ecf8;font-weight:normal;transform:scaleX(0.8048);-webkit-text-stroke:0.18px #e6ecf8;">[Имя автора]</span><span class="t" style="left:31.00px;top:138.10px;font-size:2.20px;color:#e6ecf8;font-weight:normal;transform:scaleX(0.8754);-webkit-text-stroke:0.18px #e6ecf8;">[НАЗВАНИЕ ОРГАНИЗАЦИИ] [Адрес организации]</span></div>
<span class="t" style="left:41.50px;top:376.93px;font-size:12.60px;color:#444444;font-weight:normal;transform:scaleX(0.9387);">Ion (светлый)</span>
<span class="t" style="left:178.40px;top:376.93px;font-size:12.60px;color:#444444;font-weight:normal;transform:scaleX(0.9602);">Ion (темный)</span>
<span class="t" style="left:318.40px;top:376.93px;font-size:12.60px;color:#444444;font-weight:normal;transform:scaleX(0.9502);">ViewMaster</span>
<span class="t" style="left:62.30px;top:553.93px;font-size:12.60px;color:#444444;font-weight:normal;transform:scaleX(0.9114);">Whisp</span>
<span class="t" style="left:174.00px;top:553.93px;font-size:12.60px;color:#444444;font-weight:normal;transform:scaleX(0.9253);">Боковая линия</span>
<span class="t" style="left:333.90px;top:553.93px;font-size:12.60px;color:#444444;font-weight:normal;transform:scaleX(0.9631);">Грань</span>
<span class="t" style="left:50.60px;top:730.93px;font-size:12.60px;color:#444444;font-weight:normal;transform:scaleX(0.9525);">Движение</span>
<span class="t" style="left:189.00px;top:730.93px;font-size:12.60px;color:#444444;font-weight:normal;transform:scaleX(0.9268);">Интеграл</span>
<span class="t" style="left:315.20px;top:730.93px;font-size:12.60px;color:#444444;font-weight:normal;transform:scaleX(0.9478);">Окаймление</span>
<div class="a" style="left:10px;top:748px;width:436px;height:1px;background:#e1e1e1;"></div>
<span class="t" style="left:42.20px;top:756.93px;font-size:12.60px;color:#444;font-weight:normal;transform:scaleX(0.9486);"><u>Д</u>ополнительные титульные страницы с сайта Office.com</span>
<div class="a" style="left:10px;top:770px;width:436px;height:18px;overflow:hidden;"><span class="t" style="left:32.20px;top:10.43px;font-size:12.60px;color:#444;font-weight:normal;transform:scaleX(0.9463);"><u>У</u>далить текущую титульную страницу</span></div>
<svg style="left:0;top:0" width="845" height="875">
<g fill="none" stroke-width="1">
<path d="M14.5,767.5 V754.7 H29.6 V759" stroke="#6a6a6a"/><path d="M16.5,757.2 H27.6" stroke="#9a9a9a" stroke-width="1.6"/>
<circle cx="23.6" cy="763.6" r="5.8" stroke="#3f78c0" fill="#fff" stroke-width="1.2"/>
<path d="M19,761 Q23.6,757.5 28.2,761 M23.6,758 V769 M18.2,764.5 H29" stroke="#3f78c0" stroke-width="0.8"/>
<path d="M17,766.2 Q20.5,770 26,765.8" stroke="#e0632a" stroke-width="1.7"/><path d="M24.2,763.6 L27.6,764.6 L25.4,767.6 Z" fill="#e0632a" stroke="none"/>
<path d="M14.5,788 V779 H21.5 L24.6,782.2 V788" stroke="#6a6a6a"/><path d="M17,786.5 l1.2,-1.6 l1.2,1.6 M21.5,786.5 l1,-1.4" stroke="#c0392b" stroke-width="0.9"/>
</g></svg>
<div class="a" style="left:5.5px;top:787.5px;width:446px;height:39px;box-sizing:border-box;border-radius:9.5px;box-shadow:2px 4px 6px rgba(40,50,70,.65);background:#fff;"></div>
<div class="a" style="left:6px;top:788px;width:445px;height:38px;box-sizing:border-box;border:3px solid #c8161d;border-radius:9px;background:linear-gradient(180deg,#d4d4d4 0,#d0d0d0 6px,#c7c7c7 7px,#c7c7c7 100%);box-shadow:inset 0 0 0 1px #f3dada, inset 0 3px 4px rgba(0,0,0,.22);"></div>
<svg style="left:0;top:0" width="845" height="875">
<path d="M14.8,815 V802.8 H20.8 L24.3,806.3 V815 Z" fill="#f2f2f2" stroke="#6a6a6a" stroke-width="1"/><path d="M20.8,802.8 V806.2 H24.2" fill="none" stroke="#6a6a6a" stroke-width="0.9"/>
<path d="M17,809.5 l1,-1.3 l1,1.3" fill="none" stroke="#8a8a8a" stroke-width="0.8"/>
<rect x="19.8" y="807.6" width="10.4" height="10.2" fill="#8b4fb3"/><rect x="22.6" y="808.8" width="4.8" height="3" fill="#fff"/><rect x="23.2" y="814.4" width="3.6" height="2.2" fill="#fff"/>
</svg>
<span class="t" style="left:42.20px;top:803.93px;font-size:12.60px;color:#262626;font-weight:normal;transform:scaleX(0.9441);">Со<u>х</u>ранить выделенный фрагмент в коллекцию титульных страниц...</span>
<div class="a" style="left:50px;top:827px;width:1px;height:8px;background:#333;"></div>
</body></html>
